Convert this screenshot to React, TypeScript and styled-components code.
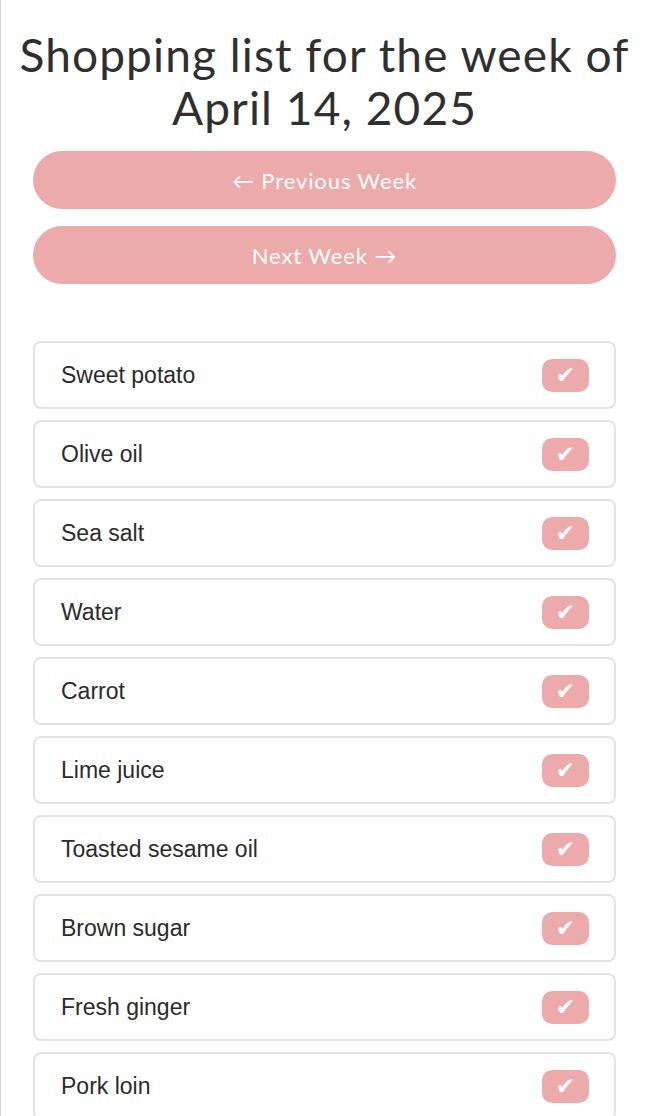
import React from "react";
import styled, { createGlobalStyle } from "styled-components";

const Global = createGlobalStyle`
  html, body { margin: 0; padding: 0; background: #fff; }
  body { font-family: "Liberation Sans", Arial, sans-serif; }
`;

const Page = styled.div`
  min-height: 1116px;
  border-left: 1px solid #d6d6d6;
  box-sizing: border-box;
  padding: 28px 30px 0 32px;
  display: flex;
  flex-direction: column;
`;

const Title = styled.h1`
  margin: 0 -16px;
  font-family: "Lato", "Noto Sans", sans-serif;
  font-weight: 400;
  font-size: 46px;
  letter-spacing: 1.1px;
  line-height: 53px;
  color: #2f2f2f;
  text-align: center;
`;

const Nav = styled.div`
  display: flex;
  flex-direction: column;
  gap: 17px;
  margin-top: 17px;
`;

const NavButton = styled.button`
  height: 58px;
  border: none;
  border-radius: 29px;
  background: #ecabaa;
  color: #fff;
  font-family: "Lato", "Noto Sans", sans-serif;
  font-size: 22px;
  letter-spacing: 0.9px;
  cursor: pointer;
`;

const List = styled.ul`
  list-style: none;
  margin: 57px 0 0;
  padding: 0;
  display: flex;
  flex-direction: column;
  gap: 11px;
`;

const Item = styled.li`
  height: 68px;
  box-sizing: border-box;
  border: 2px solid #e3e3e3;
  border-radius: 8px;
  display: flex;
  align-items: center;
  justify-content: space-between;
  padding: 0 25px 0 26px;
`;

const Label = styled.span`
  font-family: "Liberation Sans", Arial, sans-serif;
  font-size: 23px;
  color: #2b2b2b;
`;

const Check = styled.span`
  width: 47px;
  height: 33px;
  border-radius: 10px;
  background: #ecabaa;
  color: #fff;
  display: flex;
  align-items: center;
  justify-content: center;
  font-family: "DejaVu Sans", sans-serif;
  font-size: 23px;
  line-height: 1;
`;

const items = [
  "Sweet potato",
  "Olive oil",
  "Sea salt",
  "Water",
  "Carrot",
  "Lime juice",
  "Toasted sesame oil",
  "Brown sugar",
  "Fresh ginger",
  "Pork loin",
];

export default function App() {
  return (
    <>
      <Global />
      <Page>
        <Title>
          Shopping list for the week of
          <br />
          April 14, 2025
        </Title>
        <Nav>
          <NavButton>← Previous Week</NavButton>
          <NavButton>Next Week →</NavButton>
        </Nav>
        <List>
          {items.map((it) => (
            <Item key={it}>
              <Label>{it}</Label>
              <Check>✔</Check>
            </Item>
          ))}
        </List>
      </Page>
    </>
  );
}
